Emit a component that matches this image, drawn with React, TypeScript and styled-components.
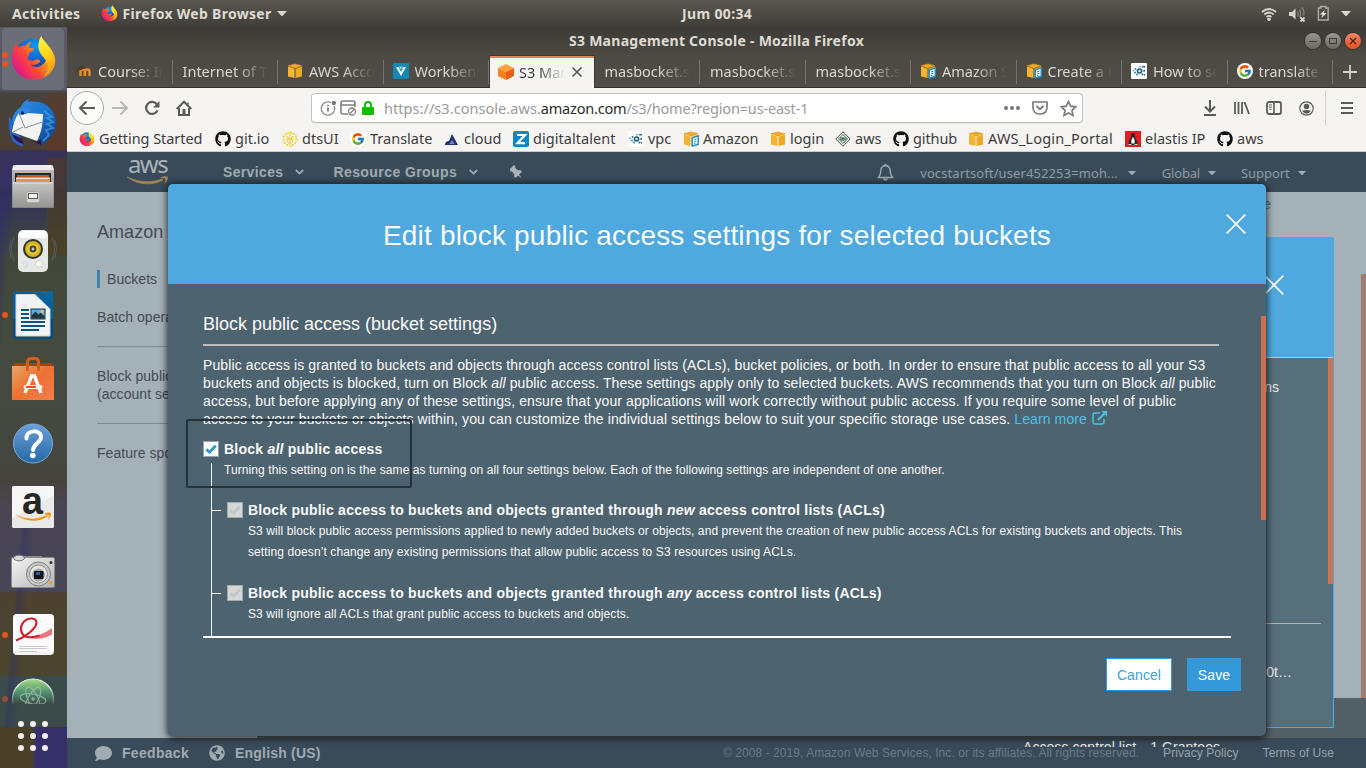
import React from "react";
import styled, { createGlobalStyle, css } from "styled-components";
import { FaGithub, FaComment, FaGlobeAmericas } from "react-icons/fa";
import { FcGoogle } from "react-icons/fc";

const ubuntu = `"Noto Sans", "Open Sans", sans-serif`;
const arial = `"Liberation Sans", Arial, sans-serif`;

const Global = createGlobalStyle`
  * { box-sizing: border-box; }
  html, body { margin: 0; padding: 0; overflow: hidden; background: #3c3b37; }
  svg { display: block; flex: none; }
`;

const Screen = styled.div`
  width: 1366px;
  height: 768px;
  display: flex;
  flex-direction: column;
  overflow: hidden;
  white-space: nowrap;
  font-family: ${ubuntu};
`;

/* ---------- system bar ---------- */
const SystemBar = styled.header`
  height: 27px;
  flex: none;
  display: grid;
  grid-template-columns: 670px auto 1fr;
  align-items: center;
  padding: 0 12px;
  background: linear-gradient(#5b574f, #3f3e39);
  color: #dfdbd2;
  font-weight: 700;
  font-size: 14px;
  line-height: 26px;
`;
const SystemLeft = styled.div`
  display: flex;
  align-items: center;
`;
const AppMenu = styled.div`
  display: flex;
  align-items: center;
  gap: 5px;
  margin-left: 20px;
`;
const Tracked = styled.span<{ $ls: number }>`
  letter-spacing: ${(p) => p.$ls}px;
`;
const SystemRight = styled.div`
  display: flex;
  align-items: center;
  justify-content: flex-end;
  gap: 11px;
  padding-right: 3px;
`;

/* ---------- desktop body and dock ---------- */
const Desktop = styled.div`
  flex: 1;
  display: flex;
  min-height: 0;
`;
const Dock = styled.nav`
  width: 67px;
  flex: none;
  display: flex;
  flex-direction: column;
  background:
    linear-gradient(90deg, transparent 47px, rgba(112, 52, 24, 0.35) 47px) 0 66px / 67px 58px no-repeat,
    linear-gradient(90deg, transparent 47px, rgba(84, 62, 20, 0.5) 47px) 0 130px / 67px 98px no-repeat,
    linear-gradient(95deg, rgba(46, 44, 110, 0.5) 6px, transparent 15px) 0 165px / 67px 300px no-repeat,
    linear-gradient(95deg, transparent 22px, rgba(40, 42, 110, 0.35) 26px, transparent 36px) 0 480px / 67px 220px no-repeat,
    linear-gradient(90deg, #4a3f28 32px, #36306a 36px) 0 700px / 67px 41px no-repeat,
    linear-gradient(
      #5b5967 0, #5b5967 62px, #45433f 66px, #4c3f33 122px, #37315b 124px, #353164 160px,
      #30305a 162px, #414839 230px, #454a40 340px, #44473f 425px, #46433f 455px,
      #4a4552 480px, #474557 564px, #4d4230 566px, #4a452f 648px, #394b4c 650px, #3d4a46 700px
    );
`;
const DockItem = styled.div<{ $active?: boolean; $cut?: boolean }>`
  position: relative;
  height: ${(p) => (p.$cut ? 37 : 64)}px;
  flex: none;
  display: flex;
  justify-content: center;
  padding: 8px 1px 0 0;
  overflow: hidden;
  ${(p) =>
    p.$active &&
    css`
      &::before {
        content: "";
        position: absolute;
        left: 2px;
        top: 1px;
        width: 62px;
        height: 62px;
        border-radius: 4px;
        background: rgba(125, 132, 136, 0.5);
      }
    `}
  > svg {
    position: relative;
  }
`;
const RunDots = styled.div<{ $faded?: boolean }>`
  position: absolute;
  left: 2px;
  top: 0;
  bottom: ${(p) => (p.$faded ? "-27px" : "0")};
  display: flex;
  flex-direction: column;
  justify-content: center;
  gap: 3px;
  opacity: ${(p) => (p.$faded ? 0.5 : 1)};
`;
const RunDot = styled.i`
  width: 6px;
  height: 6px;
  border-radius: 50%;
  background: #e95420;
`;
const AppGrid = styled.div`
  display: grid;
  grid-template-columns: repeat(3, 6px);
  gap: 6px;
  margin: 17px 0 0 18px;
`;
const AppDot = styled.i`
  width: 6px;
  height: 6px;
  border-radius: 50%;
  background: #f0efee;
`;

/* ---------- browser window ---------- */
const Browser = styled.main`
  flex: 1;
  min-width: 0;
  display: flex;
  flex-direction: column;
`;
const TitleBar = styled.div`
  height: 28px;
  flex: none;
  display: grid;
  grid-template-columns: 1fr auto 1fr;
  align-items: center;
  padding: 0 5px;
  background: linear-gradient(#3b3a36, #4c4a44);
  color: #dfdbd2;
  font-size: 14px;
  line-height: 26px;
  font-weight: 700;
`;
const WinButtons = styled.div`
  display: flex;
  justify-content: flex-end;
  gap: 4px;
`;
const WinButton = styled.span<{ $close?: boolean }>`
  width: 16px;
  height: 16px;
  border-radius: 50%;
  display: grid;
  place-items: center;
  background: ${(p) => (p.$close ? "linear-gradient(#f58464, #e0501f)" : "linear-gradient(#99968e, #6a6862)")};
  box-shadow: 0 0 0 1px rgba(40, 39, 36, 0.55);
`;
const TabStrip = styled.div`
  height: 33px;
  flex: none;
  display: flex;
  background: linear-gradient(#4c4a44, #504d46);
  box-shadow: inset 0 -1px #33322e;
`;
const Tab = styled.div<{ $active?: boolean }>`
  width: 105.5px;
  flex: none;
  display: flex;
  align-items: center;
  gap: 6px;
  padding: 0 10px 1px 10px;
  color: #dbd7ce;
  font-size: 14.5px;
  position: relative;
  > svg:first-child,
  > i:first-child {
    margin-left: -1px;
  }
  ${(p) =>
    p.$active
      ? css`
          gap: 5px;
          background: #f5f4f2;
          color: #3b3b3b;
          border: 1px solid #3a3935;
          border-bottom: 0;
          box-shadow: inset 0 2px #ef8055;
          padding: 0 10px 1px 9px;
        `
      : css`
          &::after {
            content: "";
            position: absolute;
            right: 0;
            top: 5px;
            height: 24px;
            width: 1px;
            background: #77746c;
          }
        `}
`;
const TabLabel = styled.span<{ $fade?: number }>`
  flex: 1;
  min-width: 0;
  overflow: hidden;
  line-height: 24px;
  mask-image: linear-gradient(90deg, #000 calc(100% - ${(p) => p.$fade ?? 32}px), transparent);
`;
const NewTab = styled.div`
  flex: 1;
  display: grid;
  place-items: center;
`;
const NavBar = styled.div`
  height: 40px;
  flex: none;
  display: flex;
  align-items: center;
  background: #f5f4f2;
  padding-left: 3px;
`;
const NavIcon = styled.span<{ $w?: number }>`
  width: ${(p) => p.$w ?? 32}px;
  display: grid;
  place-items: center;
`;
const BackButton = styled.span`
  width: 34px;
  height: 34px;
  border: 1px solid #a9a7a4;
  border-radius: 50%;
  background: #fbfbfa;
  display: grid;
  place-items: center;
`;
const UrlBar = styled.div`
  width: 772px;
  height: 30px;
  margin-left: 111px;
  display: flex;
  align-items: center;
  border: 1px solid #c3c0bc;
  border-radius: 4px;
  background: #fff;
  box-shadow: 0 1px 1px rgba(0, 0, 0, 0.05);
  padding-left: 8px;
`;
const Url = styled.span`
  flex: 1;
  margin-left: 7px;
  padding-bottom: 1px;
  color: #9a9a9a;
  font-size: 14.5px;
  letter-spacing: -0.2px;
  b {
    font-weight: 400;
    color: #2a2a2a;
  }
`;
const NavRight = styled.div`
  display: flex;
  align-items: center;
  margin-left: 111px;
`;
const NavRule = styled.i`
  width: 1px;
  height: 34px;
  margin: 0 5px 0 3px;
  background: #d3d1ce;
`;
const Bookmarks = styled.div`
  height: 24px;
  flex: none;
  display: flex;
  align-items: center;
  gap: 12px;
  padding: 0 0 2px 12px;
  background: #f5f4f2;
  border-bottom: 1px solid #cfcdca;
  color: #3d3d3d;
  font-size: 14.5px;
`;
const Bookmark = styled.div`
  display: flex;
  align-items: center;
  gap: 4px;
`;
const BookmarkLabel = styled.span<{ $w: number; $ls?: number }>`
  width: ${(p) => p.$w}px;
  line-height: 21px;
  letter-spacing: ${(p) => p.$ls ?? 0}px;
`;
const Tile = styled.i<{ $bg: string; $round?: boolean }>`
  width: 16px;
  height: 16px;
  flex: none;
  display: grid;
  place-items: center;
  background: ${(p) => p.$bg};
  border-radius: ${(p) => (p.$round ? "50%" : "1px")};
`;

/* ---------- AWS page ---------- */
const Page = styled.div`
  position: relative;
  flex: 1;
  display: flex;
  flex-direction: column;
  min-height: 0;
  overflow: hidden;
  background: #a5b1b9;
  font-family: ${arial};
`;
const AwsHeader = styled.div`
  height: 40px;
  flex: none;
  display: flex;
  align-items: center;
  background: #394a58;
  color: #a0abb1;
`;
const AwsLogo = styled.div`
  width: 42px;
  height: 32px;
  margin: 0 0 0 60px;
  padding-left: 1px;
  font: 24px/15px ${ubuntu};
  color: #a9b4ba;
  letter-spacing: -1.6px;
  svg {
    margin: 5px 0 0 -1px;
  }
`;
const AwsMenu = styled.div<{ $left: number; $ls?: number; $small?: boolean; $gap: number }>`
  display: flex;
  align-items: center;
  margin-left: ${(p) => p.$left}px;
  gap: ${(p) => p.$gap}px;
  font: ${(p) => (p.$small ? `13px/20px ${ubuntu}` : `bold 14px/20px ${arial}`)};
  letter-spacing: ${(p) => p.$ls ?? 0}px;
  color: ${(p) => (p.$small ? "#8f9ca4" : "#a0abb1")};
  ${(p) => p.$small && "padding-top: 2px;"}
`;
const HeaderIcon = styled.span<{ $left: number }>`
  margin-left: ${(p) => p.$left}px;
`;
const Content = styled.div`
  flex: 1;
  display: flex;
  position: relative;
`;
const Sidebar = styled.aside`
  width: 190px;
  padding: 29px 0 0 30px;
  color: #434b52;
  font-size: 14px;
  line-height: 18px;
  letter-spacing: 0.05px;
`;
const SideTitle = styled.div`
  font-size: 18px;
  line-height: 22px;
  margin-bottom: 27px;
`;
const SideCurrent = styled.div`
  border-left: 3px solid #3d83ab;
  padding-left: 7px;
`;
const SideLink = styled.div<{ $top: number }>`
  margin-top: ${(p) => p.$top}px;
`;
const SideRule = styled.i<{ $top: number }>`
  display: block;
  height: 1px;
  margin-top: ${(p) => p.$top}px;
  background: #7f8b93;
`;
const FooterBar = styled.footer`
  height: 30px;
  flex: none;
  display: flex;
  align-items: center;
  padding: 0 32px 0 28px;
  background: #394a58;
  color: #a0abb1;
  font-weight: 700;
  font-size: 14px;
`;
const FooterLink = styled.span<{ $left: number; $ls?: number }>`
  margin-left: ${(p) => p.$left}px;
  letter-spacing: ${(p) => p.$ls ?? 0}px;
`;
const Legal = styled.span<{ $left?: number; $dim?: boolean }>`
  margin-left: ${(p) => (p.$left ? `${p.$left}px` : "auto")};
  font-weight: 400;
  font-size: 12px;
  letter-spacing: 0.06px;
  color: ${(p) => (p.$dim ? "#6c7b86" : "#98a4ab")};
`;
const LowerBand = styled.div`
  position: absolute;
  left: 190px;
  right: 0;
  bottom: 0;
  height: 40px;
  background: #546067;
`;
const PageThumb = styled.div`
  position: absolute;
  right: 0;
  top: 82px;
  width: 5px;
  height: 424px;
  background: #9f7d70;
  border-radius: 1px 0 0 0;
`;
const PeekLink = styled.div`
  position: absolute;
  right: 95px;
  top: 3px;
  font-size: 14px;
  line-height: 18px;
  color: #3f7793;
`;

/* details drawer that sits under the dialog */
const Drawer = styled.section`
  position: absolute;
  left: 800px;
  top: 45px;
  width: 467px;
  height: 491px;
  display: flex;
  flex-direction: column;
  border: 1px solid #4fa9de;
  border-radius: 2px 2px 0 0;
  background: #576e7b;
  color: #e6e9ea;
  font-size: 14px;
`;
const DrawerHead = styled.div`
  height: 120px;
  flex: none;
  display: flex;
  justify-content: flex-end;
  padding: 37px 49px 0 0;
  background: #4fa9de;
  border-bottom: 1px solid #c3cbd0;
`;
const DrawerLine = styled.div<{ $top: number; $right: number }>`
  margin-top: ${(p) => p.$top}px;
  padding-right: ${(p) => p.$right}px;
  line-height: 18px;
  text-align: right;
`;
const DrawerRule = styled.i`
  height: 1px;
  margin: 227px 12px 0 0;
  background: #aeb6ba;
`;
const DrawerThumb = styled.div`
  position: absolute;
  right: 0;
  top: 120px;
  width: 5px;
  height: 226px;
  background: #cf7150;
`;
const ClippedLine = styled.div`
  position: absolute;
  left: 956px;
  top: 586px;
  height: 9px;
  overflow: hidden;
  display: flex;
  gap: 14px;
  font-size: 14px;
  line-height: 18px;
  letter-spacing: 0.06px;
  color: #e8ebec;
`;

/* ---------- dialog ---------- */
const Dialog = styled.section`
  position: absolute;
  left: 101px;
  top: 32px;
  width: 1098px;
  height: 552px;
  display: flex;
  flex-direction: column;
  border-radius: 5px;
  overflow: hidden;
  background: #4d6370;
  color: #fafafa;
  box-shadow: 0 1px 7px 1px rgba(0, 0, 0, 0.75);
`;
const DialogHead = styled.div`
  height: 100px;
  flex: none;
  display: grid;
  grid-template-columns: 40px 1fr 20px;
  padding: 30px 20px 0 0;
  background: #4fa9de;
`;
const DialogTitle = styled.h1`
  margin: 4px 0 0;
  font: 28px/36px ${arial};
  letter-spacing: 0.18px;
  text-align: center;
`;
const DialogBody = styled.div`
  position: relative;
  height: 352px;
  flex: none;
  display: flex;
  flex-direction: column;
  padding: 29px 47px 0 35px;
`;
const SectionTitle = styled.h2`
  margin: 0;
  padding-bottom: 9px;
  border-bottom: 2px solid #bcbebe;
  font: 18px/22px ${arial};
`;
const Intro = styled.p`
  margin: 10px 0 12px;
  font-size: 14px;
  line-height: 18px;
  letter-spacing: 0.11px;
`;
const Line = styled.span`
  display: block;
`;
const Learn = styled.a`
  color: #4fc1e0;
  svg {
    display: inline-block;
    vertical-align: -1px;
    margin-left: 5px;
  }
`;
const OptionRow = styled.div`
  display: flex;
  align-items: center;
  height: 19px;
  gap: 5px;
`;
const OptionTitle = styled.strong`
  font-size: 14px;
  line-height: 19px;
  letter-spacing: 0.23px;
`;
const OptionText = styled.div<{ $indent: number; $up?: boolean }>`
  margin: ${(p) => (p.$up ? "-3px" : "1px")} 0 0 ${(p) => p.$indent}px;
  font-size: 12px;
  line-height: 21px;
  letter-spacing: ${(p) => (p.$up ? 0.088 : 0.1)}px;
`;
const Branch = styled.div`
  flex: 1;
  margin: 4px 0 0 8px;
  border-left: 1px solid #f4f6f7;
`;
const BranchItem = styled.div<{ $top: number }>`
  margin-top: ${(p) => p.$top}px;
`;
const Twig = styled.i`
  width: 9px;
  height: 1px;
  margin-right: 1px;
  background: #f4f6f7;
`;
const Box = styled.span<{ $disabled?: boolean }>`
  width: 16px;
  height: 16px;
  flex: none;
  display: grid;
  place-items: center;
  align-self: flex-start;
  margin-top: 1px;
  border: 1px solid ${(p) => (p.$disabled ? "#a3a9aa" : "#9aa0a3")};
  background: ${(p) => (p.$disabled ? "#d5d6d6" : "#fff")};
`;
const DialogThumb = styled.div`
  position: absolute;
  right: 0;
  top: 32px;
  width: 5px;
  height: 204px;
  background: #cf7150;
`;
const Highlight = styled.div`
  position: absolute;
  left: 18px;
  top: 135px;
  width: 226px;
  height: 69px;
  border: 2px solid #26333b;
  border-radius: 2px;
`;
const DialogFoot = styled.div`
  flex: 1;
  display: flex;
  justify-content: flex-end;
  align-items: flex-start;
  margin: 0 35px;
  padding: 20px 0 0;
  border-top: 2px solid #fff;
`;
const ActionButton = styled.button<{ $primary?: boolean }>`
  width: ${(p) => (p.$primary ? 54 : 66)}px;
  height: 33px;
  padding: 0;
  border: 1px solid #3399d8;
  background: ${(p) => (p.$primary ? "#3399d8" : "#fff")};
  color: ${(p) => (p.$primary ? "#fff" : "#3d9fdc")};
  font: 14px ${arial};
  letter-spacing: 0.1px;
`;
const Actions = styled.div`
  display: flex;
  gap: 15px;
  margin-right: -10px;
`;

/* ---------- drawings ---------- */
const Firefox = ({ size, id }: { size: number; id: string }) => (
  <svg width={size} height={size} viewBox="0 0 48 48">
    <defs>
      <radialGradient id={id + "b"} cx="55%" cy="20%" r="80%">
        <stop offset="0" stopColor="#0a9df2" />
        <stop offset=".6" stopColor="#1550c4" />
        <stop offset="1" stopColor="#2a1a7a" />
      </radialGradient>
      <linearGradient id={id + "r"} x1=".95" y1=".2" x2=".1" y2=".75">
        <stop offset="0" stopColor="#ffd52a" />
        <stop offset=".3" stopColor="#ff9a1c" />
        <stop offset=".6" stopColor="#ff4a35" />
        <stop offset="1" stopColor="#e3158a" />
      </linearGradient>
      <linearGradient id={id + "y"} x1="0" y1="0" x2=".4" y2="1">
        <stop offset="0" stopColor="#fff44f" />
        <stop offset=".5" stopColor="#ffdc1c" />
        <stop offset="1" stopColor="#ff9c14" />
      </linearGradient>
    </defs>
    <circle cx="23.500" cy="22.500" r="18.500" fill={`url(#${id}b)`} />
    <path
      d="M7 8c0 2 .5 4 1 5 2-2 5-3 8-2 1.500-2.500 4-3.500 6-3.500-2 2-3 4-2.500 5.500l5 .8c-.3 2.700-3 3-5 4.700 0 1.500 1 2.500-2 4.500 1 3 4 4 7 3 2-1.500 6-1.500 6.500 1-2 2-6 4-10 3.500 3 3 9 3 13-1 5-4 5-11 1-17 7 3 11 9 10 17-1 9-10 16-21 16C12 45.500 2 36 2 24 2 18 4 11 7 8z"
      fill={`url(#${id}r)`}
    />
    <path d="M32 1c2 6 12 12 14 23 1 9-4 16-12 19 4-4 6-9 4-14-2-6-8-9-9-16-.5-5 1.500-10 3-12z" fill={`url(#${id}y)`} />
  </svg>
);

const Thunderbird = () => (
  <svg width="50" height="50" viewBox="0 0 50 50">
    <defs>
      <linearGradient id="tb" x1="0" y1="0" x2="1" y2="1">
        <stop offset="0" stopColor="#2f93e6" />
        <stop offset=".55" stopColor="#1c6fc9" />
        <stop offset="1" stopColor="#12306f" />
      </linearGradient>
    </defs>
    <path d="M13 8C15 3 18 1 22 0c-1 1-2 2-2 3 12-2 22 3 26 12 4 9 2 19-5 25-3 3-6 6-9 7 2-2 2-4 2-6-8 1-17-2-26-8C1 25 4 13 13 8z" fill="url(#tb)" />
    <path d="M1 17c-1 9 0 18 4 25 2 3 6 5 10 5L9 30z" fill="#2468c4" />
    <path d="M11 14c3 0 6 2 9 0l15 1c0 9-2 20-6 27L4 33c1-7 3-14 7-19z" fill="#f3f3f4" />
    <path d="M11 14l6 15 17-6M5 33l10-5" fill="none" stroke="#8d9097" strokeWidth="1" />
    <path d="M9 12c3-4 8-4 13-1l-4 4-6 1z" fill="#3187dc" />
    <path d="M4 35c3 7 7 9 12 10l-2-5zM22 41l7 2 4-3v6z" fill="#2c1258" />
    <path d="M36 12l8 6-5 1 6 4-6 2 6 4-7 2 3 5-6 6" fill="none" stroke="#45a8ea" strokeWidth="2" opacity=".6" />
    <circle cx="14.500" cy="14" r="1.700" fill="#14284f" />
  </svg>
);

const Files = () => (
  <svg width="48" height="48" viewBox="0 0 48 48">
    <defs>
      <linearGradient id="fc" x1="0" y1="0" x2="0" y2="1">
        <stop offset="0" stopColor="#b9b9b9" />
        <stop offset="1" stopColor="#858585" />
      </linearGradient>
      <linearGradient id="fd2" x1="0" y1="0" x2="0" y2="1">
        <stop offset="0" stopColor="#c4c4c3" />
        <stop offset="1" stopColor="#959594" />
      </linearGradient>
    </defs>
    <path d="M4 3q.5-1 2-1h36q1.500 0 2 1l1 4H3z" fill="#ededec" />
    <path d="M3 7h42v37q0 1-1 1H4q-1 0-1-1z" fill="url(#fc)" />
    <path d="M6 10h36v9H6z" fill="#2b2523" />
    <path d="M8 12h32v7H8z" fill="#c4571f" />
    <path d="M7 14.500h34v1.500H7z" fill="#f3dcc7" />
    <path d="M7 16h34v3H7z" fill="#e89045" />
    <path d="M4 19.500h40V44H4z" fill="url(#fd2)" />
    <path d="M4 19.500h40v1H4z" fill="#e4e4e3" />
    <rect x="17.500" y="28.500" width="13" height="11" rx="2" fill="#d6d6d5" stroke="#a9a9a8" />
    <rect x="19.500" y="30.500" width="9" height="5" fill="#f4f4f4" stroke="#555" />
  </svg>
);

const Speaker = () => (
  <svg width="48" height="48" viewBox="0 0 48 48">
    <path d="M5 10q-5 12 0 24M2 13q-3 9 0 18M43 10q5 12 0 24M46 13q3 9 0 18" fill="none" stroke="#6c8cb0" opacity=".35" />
    <rect x="9" y="3" width="30" height="42" rx="5" fill="#e6e8e6" />
    <rect x="10" y="4" width="28" height="7" rx="4" fill="#fdfdfd" />
    <circle cx="24" cy="22" r="10" fill="#2e3130" />
    <circle cx="24" cy="22" r="8" fill="#d3b21b" />
    <circle cx="24" cy="22" r="5.500" fill="#e5cd38" />
    <circle cx="24" cy="22" r="3.400" fill="#42443e" />
    <circle cx="24" cy="22" r="1.400" fill="#c8c8c2" />
    <circle cx="30" cy="37" r="3.500" fill="#fff" stroke="#c5c9c6" />
    <rect x="14" y="35" width="4" height="5" rx="1" fill="none" stroke="#d8dad8" />
  </svg>
);

const Writer = () => (
  <svg width="48" height="48" viewBox="0 0 48 48">
    <path d="M7 0h26l11 11v34q0 3-3 3H7q-3 0-3-3V3q0-3 3-3z" fill="#06609b" />
    <path d="M4 28h40v17q0 3-3 3H7q-3 0-3-3z" fill="#064a7a" />
    <path d="M32 0h12v12z" fill="#0768a8" />
    <path d="M7 3.500h19L41 18v27H7z" fill="#f2f3f4" stroke="#cdd5da" />
    <path d="M12 19h8M12 23h8M12 27h8M12 31h24M12 35h24M12 39h18" stroke="#0b5480" strokeWidth="2" />
    <rect x="22" y="18" width="14" height="10" fill="#56b0e0" stroke="#17324a" />
    <path d="M22.500 27.500v-3l4-4 3 3 2-2 4 4v2z" fill="#26333b" />
    <circle cx="33" cy="20.500" r="1.700" fill="#e6c14e" />
  </svg>
);

const SoftwareBag = () => (
  <svg width="48" height="48" viewBox="0 0 48 48">
    <defs>
      <linearGradient id="bag" x1="0" y1="0" x2="1" y2="1">
        <stop offset="0" stopColor="#eaa562" />
        <stop offset=".5" stopColor="#ec7033" />
        <stop offset="1" stopColor="#f37f4d" />
      </linearGradient>
    </defs>
    <path d="M3 12l3-4h36l3 4z" fill="#b23b0e" />
    <path d="M3 11h42v34H3z" fill="url(#bag)" />
    <path d="M18.500 16V7q0-3.500 4-3.500h3q4 0 4 3.500v9" fill="none" stroke="#e0561f" strokeWidth="3" />
    <path d="M16 38l6.500-17h3L32 38" fill="none" stroke="#fff" strokeWidth="3.400" />
    <rect x="14.500" y="30" width="19" height="4" rx="2" fill="#fff" />
    <rect x="17" y="31" width="10" height="2" fill="#e4561f" />
  </svg>
);

const Help = () => (
  <svg width="48" height="48" viewBox="0 0 48 48">
    <defs>
      <linearGradient id="hp" x1="0" y1="0" x2="0" y2="1">
        <stop offset="0" stopColor="#6b9fd8" />
        <stop offset="1" stopColor="#2669a5" />
      </linearGradient>
    </defs>
    <circle cx="24" cy="24.500" r="19.500" fill="url(#hp)" stroke="#7ea8d6" />
    <path d="M17.500 19.500c-.5-9 14.500-9.500 14.500-1.500 0 6-7.500 6-8 13" fill="none" stroke="#fff" strokeWidth="4" strokeLinecap="round" />
    <circle cx="23.800" cy="36.500" r="2.800" fill="#fff" />
  </svg>
);

const AmazonTile = () => (
  <svg width="48" height="48" viewBox="0 0 48 48">
    <rect x="3" y="3" width="42" height="42" rx="1.500" fill="#e9e9e9" />
    <path d="M3 35L45 12V5q0-2-2-2H5Q3 3 3 5z" fill="#f6f6f6" />
    <text x="13" y="31" fontFamily="Liberation Sans, sans-serif" fontWeight="700" fontSize="39" textLength="21" lengthAdjust="spacingAndGlyphs" fill="#262626">a</text>
    <path d="M6 31c10 8 24 9 33 2l-1-1c-10 5-22 5-32-1z" fill="#f79400" />
    <path d="M35 31c2-1.500 5-2 7-1 0 2-1 5-3 7 .6-2 1-4 .7-4.800z" fill="#f79400" />
  </svg>
);

const Camera = () => (
  <svg width="48" height="48" viewBox="0 0 48 48">
    <defs>
      <linearGradient id="cm" x1="0" y1="0" x2="1" y2="1">
        <stop offset="0" stopColor="#f5f5f5" />
        <stop offset="1" stopColor="#b4b4b4" />
      </linearGradient>
    </defs>
    <path d="M15 9h18v2H15z" fill="#8b8b89" />
    <rect x="2.500" y="10.500" width="43" height="30" rx="1.500" fill="url(#cm)" stroke="#8a8a88" />
    <ellipse cx="10" cy="11" rx="5.500" ry="2.800" fill="#d8d8d6" stroke="#777" />
    <circle cx="29.500" cy="27" r="12" fill="#c9c9c7" stroke="#7d7d7b" />
    <circle cx="29.500" cy="27" r="9" fill="#e3e3e1" stroke="#8d8d8b" />
    <circle cx="29.500" cy="28" r="6.500" fill="#a5a5a3" />
    <rect x="25" y="24" width="9.500" height="8" rx="1" fill="#10151d" />
    <path d="M27 25h4v3h-4z" fill="#2f5d9c" />
    <circle cx="42" cy="15.500" r="1.500" fill="#333" />
    <rect x="40" y="34.500" width="3" height="3" fill="#e8a224" />
  </svg>
);

const Evince = () => (
  <svg width="48" height="48" viewBox="0 0 48 48">
    <rect x="4" y="3" width="41" height="41" rx="4" fill="#f4f4f4" />
    <rect x="4" y="3" width="41" height="38" rx="4" fill="#fff" opacity=".6" />
    <path d="M17 25.500c10 .5 19-3 26-8.500v6.500c-8 4.500-17 6-26 2z" fill="#e5767b" />
    <path d="M7 29.500C17 26 27.500 17 27.500 11.500c0-5.500-10-5.500-14 1-3.500 6.500-.5 12.500 5 13.500 4 .6 8 0 12-1.500" fill="none" stroke="#d4202b" strokeWidth="2.200" />
    <path d="M10 35.500h28M10 37.500h28M10 40.500h18" stroke="#c9c9c9" />
  </svg>
);

const Atom = () => (
  <svg width="48" height="48" viewBox="0 0 48 48">
    <defs>
      <linearGradient id="at" x1="0" y1="0" x2="0" y2="1">
        <stop offset="0" stopColor="#a5e08a" />
        <stop offset=".35" stopColor="#4b8a6c" />
        <stop offset=".6" stopColor="#3b4a48" />
      </linearGradient>
      <linearGradient id="ar" x1="0" y1="0" x2="0" y2="1">
        <stop offset=".2" stopColor="#e9f2e6" />
        <stop offset=".6" stopColor="#54665f" />
      </linearGradient>
    </defs>
    <circle cx="24" cy="24.500" r="20.500" fill="url(#at)" stroke="url(#ar)" strokeWidth="1.200" />
    <g fill="none" stroke="#a6c4b5" strokeWidth="1.200" opacity=".7">
      <ellipse cx="24" cy="24" rx="13" ry="5" transform="rotate(10 24 24)" />
      <ellipse cx="24" cy="24" rx="13" ry="5" transform="rotate(65 24 24)" />
      <ellipse cx="24" cy="24" rx="13" ry="5" transform="rotate(120 24 24)" />
    </g>
    <circle cx="24" cy="24" r="1.800" fill="#a6c4b5" opacity=".7" />
  </svg>
);

const Cube = ({ doc, s3 }: { doc?: boolean; s3?: boolean }) => (
  <svg width="16" height="16" viewBox="0 0 16 16">
    {s3 ? (
      <>
        <path d="M8 0l8 4-8 4-8-4z" fill="#ffa23a" />
        <path d="M0 4l8 4v8l-8-4z" fill="#f68020" />
        <path d="M16 4L8 8v8l8-4z" fill="#ec5e16" />
      </>
    ) : (
      <>
        <path d="M8 1l7 1.700-7 2.500-7-2.500z" fill="#f0ab27" stroke="#dd9414" strokeWidth=".6" />
        <path d="M1 3.600l6.500 2.200V15L1 13.500z" fill="#f5b533" />
        <path d="M15 3.600L8.500 5.800V15l6.500-1.500z" fill="#efa823" />
        {doc && (
          <>
            <path d="M8.500 6.500L16 4v10l-7.500 2z" fill="#2b8fcb" />
            <path d="M10 7.600l4.500-1.500v6.500L10 14z" fill="#fff" />
            <path d="M11 9l2.500-.8M11 11l2.500-.8M11 12.700l1.500-.4" stroke="#2b8fcb" />
          </>
        )}
      </>
    )}
  </svg>
);

const Swarm = () => (
  <Tile $bg="#fff">
    <svg width="14" height="14" viewBox="0 0 14 14">
      <circle cx="7.500" cy="7" r="2" fill="none" stroke="#145a86" strokeWidth="1.600" />
      <g fill="#1d7397">
        <circle cx="3.500" cy="5" r=".9" /><circle cx="3" cy="8.500" r=".9" /><circle cx="5" cy="10.500" r=".9" />
        <circle cx="8" cy="2.800" r=".8" /><circle cx="11" cy="2.800" r="1" /><circle cx="11.500" cy="7" r=".8" />
        <circle cx="10.500" cy="10.500" r="1.100" /><circle cx="1.200" cy="6.500" r=".7" />
      </g>
      <path d="M12.500 2v10" stroke="#235069" strokeDasharray="1.500 2.500" />
    </svg>
  </Tile>
);

const Moodle = () => (
  <svg width="16" height="16" viewBox="0 0 16 16">
    <path d="M4.500 13V8.500q0-2 2-2t2.200 2V13M9 13V8.500q0-2 2.200-2t2.300 2V13" fill="none" stroke="#f28a22" strokeWidth="2.400" />
    <path d="M0 6l6-3 3 2-5 2zM1 6v4" fill="#4d3c31" stroke="#4d3c31" strokeWidth=".8" />
  </svg>
);

const GoogleDisc = () => (
  <Tile $bg="#fff" $round>
    <FcGoogle size={14} />
  </Tile>
);

const Vee = () => (
  <Tile $bg="#1486b6">
    <svg width="12" height="12" viewBox="0 0 12 12">
      <path d="M1 2l5 9 5-9H8.500L6 7 3.500 2z" fill="#fff" />
      <path d="M4 1.500h4L6 5z" fill="#8fd0ea" />
    </svg>
  </Tile>
);

const Caret = ({ w = 8, color = "#a0abb1" }: { w?: number; color?: string }) => (
  <svg width={w} height={w / 2 + 0.5} viewBox="0 0 8 4.500">
    <path d="M0 0h8L4 4.500z" fill={color} />
  </svg>
);
const Chevron = () => (
  <svg width="9" height="6" viewBox="0 0 9 6">
    <path d="M.8 1l3.700 3.600L8.200 1" fill="none" stroke="#a0abb1" strokeWidth="1.800" />
  </svg>
);
const Cross = () => (
  <svg width="20" height="20" viewBox="0 0 20 20">
    <path d="M.7.7l18.600 18.600M19.300.7L.7 19.300" stroke="#fff" strokeWidth="1.700" />
  </svg>
);
const Tick = ({ color }: { color: string }) => (
  <svg width="12" height="10" viewBox="0 0 12 10">
    <path d="M1.300 5.200l3.200 3L10.700 1.800" fill="none" stroke={color} strokeWidth="2.800" />
  </svg>
);

const g = "#5c5b59";

const bookmarks: { label: string; w: number; ls?: number; icon: React.ReactNode }[] = [
  { label: "Getting Started", w: 104, ls: -0.05, icon: <Firefox size={16} id="fb" /> },
  { label: "git.io", w: 35, icon: <FaGithub size={16} color="#111" /> },
  {
    label: "dtsUI",
    w: 36,
    icon: (
      <svg width="16" height="16" viewBox="0 0 16 16">
        <circle cx="8" cy="8" r="6.500" fill="none" stroke="#f3d22e" strokeWidth="1.800" strokeDasharray="2 1" />
        <path d="M4 5l3 2-2 3 3 3M12 5L9 7l2 3-3 3M8 2v11M4 8h8" fill="none" stroke="#f0cc2e" />
      </svg>
    ),
  },
  { label: "Translate", w: 62, icon: <GoogleDisc /> },
  {
    label: "cloud",
    w: 37,
    icon: (
      <svg width="16" height="16" viewBox="0 0 16 16">
        <path d="M1 14c0-3 2-4 4-4L8 3l6 11z" fill="#20347c" />
        <path d="M8 9l2.500 4h-5z" fill="#8089b5" />
      </svg>
    ),
  },
  {
    label: "digitaltalent",
    w: 83,
    ls: 0.05,
    icon: (
      <svg width="16" height="16" viewBox="0 0 16 16">
        <rect width="16" height="16" rx="2" fill="#0b87c4" />
        <path d="M4 4h8l-7.500 8.200H12" fill="none" stroke="#fff" strokeWidth="2.200" />
      </svg>
    ),
  },
  { label: "vpc", w: 23, icon: <Swarm /> },
  { label: "Amazon", w: 55, icon: <Cube doc /> },
  { label: "login", w: 33, icon: <Cube /> },
  {
    label: "aws",
    w: 26,
    icon: (
      <svg width="16" height="16" viewBox="0 0 16 16">
        <path d="M8 .8L15.200 8 8 15.200.8 8z" fill="#fff" stroke="#3c4a45" />
        <path d="M8 3.500L12.500 8 8 12.500 3.500 8z" fill="none" stroke="#3c4a45" />
        <path d="M5 7q3-2 6 0v2q-3 2-6 0z" fill="#5b8a72" />
      </svg>
    ),
  },
  { label: "github", w: 43, ls: -0.1, icon: <FaGithub size={16} color="#111" /> },
  { label: "AWS_Login_Portal", w: 125, ls: 0.2, icon: <Cube /> },
  {
    label: "elastis IP",
    w: 60,
    icon: (
      <svg width="16" height="16" viewBox="0 0 16 16">
        <rect width="16" height="16" fill="#e51c23" />
        <path d="M8 2c2 0 2 2 2 3.500 0 2 3 4 2.500 8.500h-9C3 9.500 6 7.500 6 5.500 6 4 6 2 8 2z" fill="#2b2b2b" />
        <path d="M8 6c1.500 2 2 4 1.500 6.500h-3C6 10 6.500 8 8 6zM3 14q2-2 4 0zM9 14q2-2 4 0z" fill="#fff" />
      </svg>
    ),
  },
  { label: "aws", w: 26, icon: <FaGithub size={16} color="#111" /> },
];

export default function App() {
  return (
    <Screen>
      <Global />
      <SystemBar>
        <SystemLeft>
          <Tracked $ls={0.35}>Activities</Tracked>
          <AppMenu>
            <Firefox size={17} id="fs" />
            <Tracked $ls={0.3}>Firefox Web Browser</Tracked>
            <Caret w={10} color="#dfdbd2" />
          </AppMenu>
        </SystemLeft>
        <Tracked $ls={0.35}>Jum 00:34</Tracked>
        <SystemRight>
          <svg width="16" height="16" viewBox="0 0 16 16">
            <g fill="none" stroke="#d9d5cc" strokeWidth="1.700">
              <path d="M1 6q7-6 14 0M3.300 8.500q4.700-4 9.400 0M5.500 11q2.500-2.200 5 0" />
            </g>
            <circle cx="8" cy="13.300" r="1.800" fill="#d9d5cc" />
          </svg>
          <svg width="18" height="18" viewBox="0 0 18 18">
            <path d="M1 7h3l3.500-3.500v11L4 11H1z" fill="#d9d5cc" />
            <path d="M9.500 6.500q1.500 2.500 0 5M11.500 4.500q2.500 4.500 0 8M14 2.500q3 4 1.500 8" fill="none" stroke="#85827a" strokeWidth="1.400" />
            <path d="M12.500 12.500l4 4m0-4l-4 4" stroke="#d9d5cc" strokeWidth="1.800" />
          </svg>
          <svg width="13" height="17" viewBox="0 0 14 17">
            <path d="M1.500 2.500h2.500v-1.500h5.500v1.500h2.500v13H1.500z" fill="none" stroke="#b0ada5" strokeWidth="1.500" />
            <path d="M8.500 4.500L3 9.500h3l-1.500 4 6-5.500H7.300z" fill="#e4e0d8" />
          </svg>
          <Caret w={10} color="#dfdbd2" />
        </SystemRight>
      </SystemBar>

      <Desktop>
        <Dock>
          <DockItem $active>
            <Firefox size={47} id="fd" />
            <RunDots><RunDot /><RunDot /></RunDots>
          </DockItem>
          <DockItem><Thunderbird /></DockItem>
          <DockItem><Files /></DockItem>
          <DockItem><Speaker /></DockItem>
          <DockItem><Writer /><RunDots><RunDot /></RunDots></DockItem>
          <DockItem><SoftwareBag /></DockItem>
          <DockItem><Help /></DockItem>
          <DockItem><AmazonTile /></DockItem>
          <DockItem><Camera /></DockItem>
          <DockItem><Evince /><RunDots><RunDot /></RunDots></DockItem>
          <DockItem $cut><Atom /><RunDots $faded><RunDot /></RunDots></DockItem>
          <AppGrid>
            {Array.from({ length: 9 }, (_, i) => <AppDot key={i} />)}
          </AppGrid>
        </Dock>

        <Browser>
          <TitleBar>
            <span />
            <Tracked $ls={0.26}>S3 Management Console - Mozilla Firefox</Tracked>
            <WinButtons>
              <WinButton><svg width="8" height="8"><path d="M0 4.500h8" stroke="#3c3b37" /></svg></WinButton>
              <WinButton><svg width="8" height="8"><rect x=".5" y="1.500" width="7" height="5" fill="none" stroke="#3c3b37" /></svg></WinButton>
              <WinButton $close><svg width="8" height="8"><path d="M1 1l6 6m0-6L1 7" stroke="#4b2415" strokeWidth="1.400" /></svg></WinButton>
            </WinButtons>
          </TitleBar>

          <TabStrip>
            <Tab><Moodle /><TabLabel>Course: Int</TabLabel></Tab>
            <Tab><TabLabel>Internet of Things</TabLabel></Tab>
            <Tab><Cube /><TabLabel>AWS Account</TabLabel></Tab>
            <Tab><Vee /><TabLabel>Workbench</TabLabel></Tab>
            <Tab $active>
              <Cube s3 />
              <TabLabel $fade={26}>S3 Management</TabLabel>
              <svg width="14" height="14" viewBox="0 0 14 14"><path d="M2.500 2.500l9 9m0-9l-9 9" stroke="#5a5a58" strokeWidth="1.700" /></svg>
            </Tab>
            <Tab><TabLabel>masbocket.s3</TabLabel></Tab>
            <Tab><TabLabel>masbocket.s3</TabLabel></Tab>
            <Tab><TabLabel>masbocket.s3</TabLabel></Tab>
            <Tab><Cube doc /><TabLabel>Amazon S3</TabLabel></Tab>
            <Tab><Cube doc /><TabLabel $fade={26}>Create a B</TabLabel></Tab>
            <Tab><Swarm /><TabLabel>How to set</TabLabel></Tab>
            <Tab><GoogleDisc /><TabLabel $fade={26}>translate -</TabLabel></Tab>
            <NewTab>
              <svg width="14" height="14" viewBox="0 0 14 14"><path d="M7 0v14M0 7h14" stroke="#d5d1c8" strokeWidth="1.800" /></svg>
            </NewTab>
          </TabStrip>

          <NavBar>
            <BackButton>
              <svg width="18" height="16" viewBox="0 0 18 16"><path d="M17 8H2M8.500 1.500L2 8l6.500 6.500" fill="none" stroke={g} strokeWidth="2" /></svg>
            </BackButton>
            <NavIcon>
              <svg width="18" height="16" viewBox="0 0 18 16"><path d="M1 8h15M9.500 1.500L16 8l-6.500 6.500" fill="none" stroke="#b9b7b5" strokeWidth="2" /></svg>
            </NavIcon>
            <NavIcon>
              <svg width="16" height="16" viewBox="0 0 16 16">
                <path d="M13.500 10.500A6 6 0 1 1 13 4.500" fill="none" stroke={g} strokeWidth="2.200" />
                <path d="M15.500 1v6.500H9z" fill={g} />
              </svg>
            </NavIcon>
            <NavIcon>
              <svg width="16" height="17" viewBox="0 0 16 17">
                <path d="M.7 9L8 1.700 15.300 9" fill="none" stroke={g} strokeWidth="2" />
                <path d="M3 8v7h10V8" fill="none" stroke={g} strokeWidth="2" />
                <path d="M6.500 9h3v6h-3z" fill={g} />
                <path d="M12 2.500v2" stroke={g} strokeWidth="1.500" />
              </svg>
            </NavIcon>
            <UrlBar>
              <svg width="18" height="18" viewBox="0 0 18 18">
                <circle cx="8" cy="9.500" r="6.700" fill="none" stroke="#8b8b8b" strokeWidth="1.300" />
                <path d="M8 8.500v4M8 5.800v1.400" stroke="#777" strokeWidth="1.700" />
                <circle cx="13.800" cy="4" r="3" fill="#fff" /><circle cx="13.800" cy="4" r="2.200" fill="#777" />
              </svg>
              <NavIcon $w={21}>
                <svg width="17" height="16" viewBox="0 0 17 16">
                  <path d="M8 14H3q-2 0-2-2V3q0-2 2-2h10q2 0 2 2v4M1 5h14" fill="none" stroke="#808080" strokeWidth="1.600" />
                  <circle cx="12" cy="11.500" r="3.500" fill="none" stroke="#808080" strokeWidth="1.300" />
                  <path d="M9.500 14l5-5" stroke="#808080" strokeWidth="1.200" />
                </svg>
              </NavIcon>
              <NavIcon $w={18}>
                <svg width="12" height="14" viewBox="0 0 12 14">
                  <path d="M3 7V4q0-3 3-3t3 3v3" fill="none" stroke="#12bc00" strokeWidth="2" />
                  <rect y="6" width="12" height="8" rx="1" fill="#12bc00" />
                </svg>
              </NavIcon>
              <Url>
                <Tracked $ls={0.05}>https://s3.console.aws.</Tracked>
                <b>amazon.com</b>
                <Tracked $ls={-0.18}>/s3/home?region=us-east-1</Tracked>
              </Url>
              <NavIcon $w={28}>
                <svg width="16" height="4"><g fill="#747474"><circle cx="2" cy="2" r="2" /><circle cx="8" cy="2" r="2" /><circle cx="14" cy="2" r="2" /></g></svg>
              </NavIcon>
              <NavIcon $w={28}>
                <svg width="16" height="14" viewBox="0 0 16 14">
                  <path d="M1 1h14v5q0 7-7 7T1 6z" fill="none" stroke="#7b7b7b" strokeWidth="1.700" strokeLinejoin="round" />
                  <path d="M4.500 5L8 8.300 11.500 5" fill="none" stroke="#7b7b7b" strokeWidth="1.900" />
                </svg>
              </NavIcon>
              <NavIcon $w={28}>
                <svg width="17" height="17" viewBox="0 0 17 17">
                  <path d="M8.500 1.500l2.200 4.700 5 .6-3.700 3.500 1 5.100-4.500-2.500L4 15.400l1-5.100L1.300 6.800l5-.6z" fill="none" stroke="#7b7b7b" strokeWidth="1.700" />
                </svg>
              </NavIcon>
            </UrlBar>
            <NavRight>
              <NavIcon>
                <svg width="14" height="16" viewBox="0 0 14 16"><path d="M7 0v11M2 6.500l5 5 5-5M1 15h12" fill="none" stroke={g} strokeWidth="2" /></svg>
              </NavIcon>
              <NavIcon>
                <svg width="16" height="14" viewBox="0 0 16 14"><path d="M1 1v12M4.500 1v12M8 1v12M10.500 1l4.500 12" stroke={g} strokeWidth="1.800" /></svg>
              </NavIcon>
              <NavIcon>
                <svg width="16" height="14" viewBox="0 0 16 14">
                  <rect x="1" y="1" width="14" height="12" rx="2" fill="none" stroke={g} strokeWidth="1.800" />
                  <path d="M8 1v12" stroke={g} strokeWidth="1.600" /><path d="M3 4h3M3 6.200h3M3.500 8.400h2" stroke={g} />
                </svg>
              </NavIcon>
              <NavIcon>
                <svg width="15" height="15" viewBox="0 0 15 15">
                  <circle cx="7.500" cy="7.500" r="6.700" fill="none" stroke={g} strokeWidth="1.200" />
                  <circle cx="7.500" cy="5.500" r="2.800" fill={g} /><path d="M3 9.800q4.500-1.500 9 0-2 3-4.500 3T3 9.800z" fill={g} />
                </svg>
              </NavIcon>
              <NavRule />
              <NavIcon>
                <svg width="12" height="12" viewBox="0 0 12 12"><path d="M0 1h12M0 6h12M0 11h12" stroke={g} strokeWidth="2" /></svg>
              </NavIcon>
            </NavRight>
          </NavBar>

          <Bookmarks>
            {bookmarks.map((b, i) => (
              <Bookmark key={i}>
                {b.icon}
                <BookmarkLabel $w={b.w} $ls={b.ls}>{b.label}</BookmarkLabel>
              </Bookmark>
            ))}
          </Bookmarks>

          <Page>
            <AwsHeader>
              <AwsLogo>
                aws
                <svg width="42" height="10" viewBox="0 0 42 10">
                  <path d="M0 1c11 8 25 9 36 3l-1-1C25 7 13 7 0 1z" fill="#a3845a" stroke="#a3845a" strokeWidth=".8" />
                  <path d="M33 2c3-2 6-2 8-1 0 2-1 5-4 7 1-2 2-4 1-5.500z" fill="#a3845a" />
                </svg>
              </AwsLogo>
              <AwsMenu $left={54} $gap={12} $ls={0.35}>Services<Chevron /></AwsMenu>
              <AwsMenu $left={29} $gap={12} $ls={0.42}>Resource Groups<Chevron /></AwsMenu>
              <HeaderIcon $left={31}>
                <svg width="14" height="14" viewBox="0 0 14 14">
                  <path d="M1 4l4-4 1.500 1.500-.3 1.500 3 2.500 2-.5L13 7l-3 2.500 3 4-4-3L6.500 13 5 11.500l.3-2-2.300-3-1.800.3z" fill="#a9b4ba" />
                </svg>
              </HeaderIcon>
              <HeaderIcon $left={354}>
                <svg width="17" height="18" viewBox="0 0 17 18">
                  <path d="M1.200 14.500q2.300-2 2.600-7Q4 3 8.500 2.500 13 3 13.200 7.500q.3 5 2.600 7z" fill="none" stroke="#a0abb1" strokeWidth="1.400" strokeLinejoin="round" />
                  <path d="M8.500 2.500V.8M6.500 15.500q2 2.500 4 0" fill="none" stroke="#a0abb1" strokeWidth="1.600" />
                </svg>
              </HeaderIcon>
              <AwsMenu $small $left={26} $gap={10} $ls={0.1}>vocstartsoft/user452253=moh...<Caret /></AwsMenu>
              <AwsMenu $small $left={26} $gap={8} $ls={-0.2}>Global<Caret /></AwsMenu>
              <AwsMenu $small $left={25} $gap={8} $ls={-0.05}>Support<Caret /></AwsMenu>
            </AwsHeader>

            <Content>
              <Sidebar>
                <SideTitle>Amazon S3</SideTitle>
                <SideCurrent>Buckets</SideCurrent>
                <SideLink $top={20}>Batch operations</SideLink>
                <SideRule $top={20} />
                <SideLink $top={20}>Block public access<br />(account settings)</SideLink>
                <SideRule $top={20} />
                <SideLink $top={20}>Feature spotlight</SideLink>
              </Sidebar>
              <LowerBand />
              <PageThumb />
              <PeekLink>e</PeekLink>
              <Drawer>
                <DrawerHead><Cross /></DrawerHead>
                <DrawerLine $top={20} $right={54}>Permissions</DrawerLine>
                <DrawerRule />
                <DrawerLine $top={39} $right={41}>0t…</DrawerLine>
                <DrawerThumb />
              </Drawer>
            </Content>

            <FooterBar>
              <FaComment size={17} />
              <FooterLink $left={10} $ls={0.3}>Feedback</FooterLink>
              <FooterLink $left={20}><FaGlobeAmericas size={16} /></FooterLink>
              <FooterLink $left={10} $ls={0.2}>English (US)</FooterLink>
              <Legal $dim>© 2008 - 2019, Amazon Web Services, Inc. or its affiliates. All rights reserved.</Legal>
              <Legal $left={24}>Privacy Policy</Legal>
              <Legal $left={24}>Terms of Use</Legal>
            </FooterBar>
            <ClippedLine><span>Access control list</span><span>1 Grantees</span></ClippedLine>

            <Dialog>
              <DialogHead>
                <span />
                <DialogTitle>Edit block public access settings for selected buckets</DialogTitle>
                <Cross />
              </DialogHead>
              <DialogBody>
                <SectionTitle>Block public access (bucket settings)</SectionTitle>
                <Intro>
                  <Line>Public access is granted to buckets and objects through access control lists (ACLs), bucket policies, or both. In order to ensure that public access to all your S3</Line>
                  <Line>buckets and objects is blocked, turn on Block <em>all</em> public access. These settings apply only to selected buckets. AWS recommends that you turn on Block <em>all</em> public</Line>
                  <Line>access, but before applying any of these settings, ensure that your applications will work correctly without public access. If you require some level of public</Line>
                  <Line>
                    access to your buckets or objects within, you can customize the individual settings below to suit your specific storage use cases.{" "}
                    <Learn>
                      Learn more
                      <svg width="16" height="14" viewBox="0 0 16 14">
                        <path d="M8 2H3Q1 2 1 4v7q0 2 2 2h7q2 0 2-2V8" fill="none" stroke="#4fc1e0" strokeWidth="1.500" />
                        <path d="M6 9l6.500-6.500" stroke="#4fc1e0" strokeWidth="2.200" />
                        <path d="M9.500 0H15v5.500z" fill="#4fc1e0" />
                      </svg>
                    </Learn>
                  </Line>
                </Intro>
                <OptionRow>
                  <Box><Tick color="#2f96d8" /></Box>
                  <OptionTitle>Block <em>all</em> public access</OptionTitle>
                </OptionRow>
                <Branch>
                  <OptionText $indent={12} $up>
                    Turning this setting on is the same as turning on all four settings below. Each of the following settings are independent of one another.
                  </OptionText>
                  <BranchItem $top={20}>
                    <OptionRow>
                      <Twig />
                      <Box $disabled><Tick color="#c3c4c4" /></Box>
                      <OptionTitle>Block public access to buckets and objects granted through <em>new</em> access control lists (ACLs)</OptionTitle>
                    </OptionRow>
                    <OptionText $indent={36}>
                      S3 will block public access permissions applied to newly added buckets or objects, and prevent the creation of new public access ACLs for existing buckets and objects. This<br />
                      setting doesn’t change any existing permissions that allow public access to S3 resources using ACLs.
                    </OptionText>
                  </BranchItem>
                  <BranchItem $top={21}>
                    <OptionRow>
                      <Twig />
                      <Box $disabled><Tick color="#c3c4c4" /></Box>
                      <OptionTitle>Block public access to buckets and objects granted through <em>any</em> access control lists (ACLs)</OptionTitle>
                    </OptionRow>
                    <OptionText $indent={36}>S3 will ignore all ACLs that grant public access to buckets and objects.</OptionText>
                  </BranchItem>
                </Branch>
                <DialogThumb />
                <Highlight />
              </DialogBody>
              <DialogFoot>
                <Actions>
                  <ActionButton>Cancel</ActionButton>
                  <ActionButton $primary>Save</ActionButton>
                </Actions>
              </DialogFoot>
            </Dialog>
          </Page>
        </Browser>
      </Desktop>
    </Screen>
  );
}
